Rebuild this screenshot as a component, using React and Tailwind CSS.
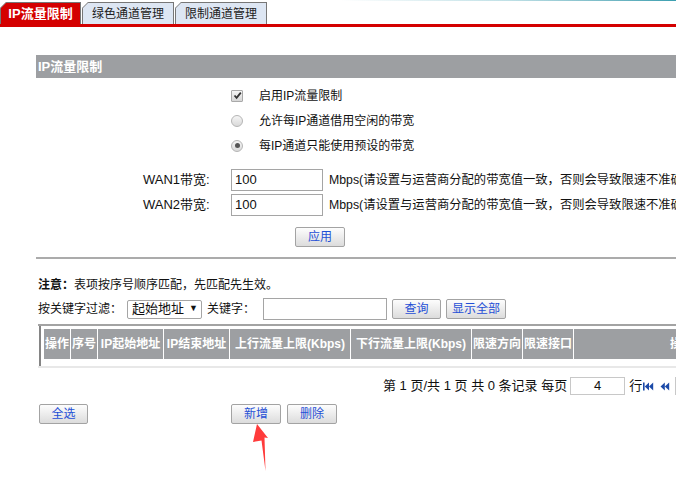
import React from "react";

const font = "font-['Liberation_Sans','Noto_Sans_CJK_SC',sans-serif]";
const btn =
    "h-[20px] border border-[#a3a3a3] rounded-[2px] bg-gradient-to-b from-[#fdfdfd] to-[#dcdcdc] text-[12px] text-[#1f4fd6] flex items-center justify-center shrink-0";

const Corner = () => (
    <svg
        className="absolute top-[-1px] left-[-1px]"
        width="7"
        height="7"
        viewBox="0 0 7 7"
    >
        <polygon points="0,0 6.5,0 0,6.5" fill="#fff" />
        <line x1="0" y1="6.5" x2="6.5" y2="0" stroke="#777" strokeWidth="1" />
    </svg>
);

const Tab = ({ label, active, width }) => (
    <div
        className={`relative h-[22px] border border-b-0 border-[#777] flex items-center justify-center shrink-0 ${width} ${
            active
                ? "bg-[#d40000] text-white font-bold text-[13px]"
                : "bg-[#dde6f3] text-[#222] text-[12px]"
        }`}
    >
        <Corner />
        {label}
    </div>
);

const Checkbox = () => (
    <span className="w-[12px] h-[12px] border border-[#a9a9a9] rounded-[1px] bg-gradient-to-b from-[#f4f4f4] to-[#d6d6d6] flex items-center justify-center shrink-0">
        <svg width="9" height="9" viewBox="0 0 9 9">
            <path d="M1.5 4.5 L3.6 6.8 L7.8 1.6" fill="none" stroke="#333" strokeWidth="1.8" />
        </svg>
    </span>
);

const Radio = ({ checked }) => (
    <span className="w-[12px] h-[12px] rounded-full border border-[#b5b5b5] bg-gradient-to-b from-[#f5f5f5] to-[#d9d9d9] flex items-center justify-center shrink-0">
        {checked && <span className="w-[5px] h-[5px] rounded-full bg-[#555]" />}
    </span>
);

const columns = [
    { label: "操作", w: "w-[26px]" },
    { label: "序号", w: "w-[26px]" },
    { label: "IP起始地址", w: "w-[65px]" },
    { label: "IP结束地址", w: "w-[65px]" },
    { label: "上行流量上限(Kbps)", w: "w-[120px]" },
    { label: "下行流量上限(Kbps)", w: "w-[120px]" },
    { label: "限速方向", w: "w-[50px]" },
    { label: "限速接口", w: "w-[50px]" },
    { label: "操作", w: "w-[216px]" },
];

const First = () => (
    <svg width="11" height="9" viewBox="0 0 11 9">
        <rect x="0" y="0.5" width="1.6" height="8" fill="#1b4aa8" />
        <polygon points="1.8,4.5 6,0.5 6,8.5" fill="#1b4aa8" />
        <polygon points="6,4.5 10.2,0.5 10.2,8.5" fill="#1b4aa8" />
    </svg>
);

const Prev = () => (
    <svg width="10" height="9" viewBox="0 0 10 9">
        <polygon points="0.5,4.5 4.8,0.5 4.8,8.5" fill="#1b4aa8" />
        <polygon points="4.8,4.5 9.2,0.5 9.2,8.5" fill="#1b4aa8" />
    </svg>
);

export default function App() {
    return (
        <div className={`relative w-[676px] h-[484px] overflow-hidden bg-white text-[12px] text-[#111] ${font}`}>
            <div className="absolute top-0 left-[340px] right-0 h-px bg-gradient-to-r from-white via-[#bfe0e6] to-[#3a9fb0]" />

            {/* tabs */}
            <div className="flex items-end gap-px h-[24px]">
                <Tab label="IP流量限制" active width="w-[81px]" />
                <Tab label="绿色通道管理" width="w-[92px]" />
                <Tab label="限制通道管理" width="w-[92px]" />
            </div>
            <div className="h-[3px] bg-[#d40000]" />

            <div className="ml-[36px] mt-[28px] whitespace-nowrap">
                <div className="h-[23px] bg-[#9d9fa2] text-white font-bold text-[13px] flex items-center pl-[2px]">
                    IP流量限制
                </div>

                <div className="mt-[5px] ml-[195px] flex flex-col">
                    <div className="h-[25px] flex items-center">
                        <Checkbox />
                        <span className="ml-[16px]">启用IP流量限制</span>
                    </div>
                    <div className="h-[25px] flex items-center">
                        <Radio />
                        <span className="ml-[16px]">允许每IP通道借用空闲的带宽</span>
                    </div>
                    <div className="h-[25px] flex items-center">
                        <Radio checked />
                        <span className="ml-[16px]">每IP通道只能使用预设的带宽</span>
                    </div>
                </div>

                {["WAN1带宽:", "WAN2带宽:"].map((label, i) => (
                    <div
                        key={label}
                        className={`flex items-center h-[22px] text-[13px] ${i === 0 ? "mt-[11px]" : "mt-[3px]"}`}
                    >
                        <span className="ml-[107px] w-[88px] shrink-0">{label}</span>
                        <div className="w-[92px] h-[22px] border border-[#a5a5a5] flex items-center pl-[3px] shrink-0">
                            100
                        </div>
                        <span className="ml-[6px] shrink-0 text-[12.3px]">
                            Mbps(请设置与运营商分配的带宽值一致，否则会导致限速不准确)
                        </span>
                    </div>
                ))}

                <div className="mt-[11px] ml-[259px]">
                    <button className={`${btn} w-[50px]`}>应用</button>
                </div>

                <div className="mt-[10px] h-[2px] bg-[#ababab]" />

                <div className="mt-[18px] pl-[2px] h-[16px] flex items-center">
                    <b>注意：</b>表项按序号顺序匹配，先匹配先生效。
                </div>

                <div className="mt-[5px] pl-[2px] h-[22px] flex items-center">
                    <span>按关键字过滤：</span>
                    <div className="ml-[5px] w-[75px] h-[19px] border border-[#a5a5a5] rounded-[2px] flex items-center justify-between pl-[4px] pr-[3px] text-[13px] shrink-0">
                        <span>起始地址</span>
                        <span className="text-[9px]">▼</span>
                    </div>
                    <span className="ml-[5px]">关键字：</span>
                    <div className="ml-[8px] w-[124px] h-[22px] border border-[#a5a5a5] shrink-0" />
                    <button className={`${btn} ml-[5px] w-[49px]`}>查询</button>
                    <button className={`${btn} ml-[5px] w-[60px]`}>显示全部</button>
                </div>

                {/* table */}
                <div className="mt-[4px] ml-[2px] border-t-2 border-[#a3a3a3]">
                    <div className="ml-[1px] border-l-2 border-[#858585] pt-[3px] pl-[3px] pb-[7px]">
                        <div className="flex gap-px">
                            {columns.map((c, i) => (
                                <div
                                    key={i}
                                    className={`${c.w} h-[30px] shrink-0 bg-[#9d9fa2] text-white font-bold text-[12px] flex items-center justify-center`}
                                >
                                    {c.label}
                                </div>
                            ))}
                        </div>
                    </div>
                    <div className="h-[2px] bg-[#e8e8e8]" />
                </div>

                {/* pagination */}
                <div className="mt-[9px] ml-[347px] h-[18px] flex items-center text-[13px]">
                    <span className="shrink-0">第 1 页/共 1 页 共 0 条记录 每页</span>
                    <div className="ml-[3px] w-[55px] h-[18px] border border-[#c8c8c8] flex items-center justify-center shrink-0">
                        4
                    </div>
                    <span className="ml-[4px] shrink-0">行</span>
                    <span className="ml-[1px] shrink-0"><First /></span>
                    <span className="ml-[6px] shrink-0"><Prev /></span>
                    <div className="ml-[5px] w-[40px] h-[18px] border border-[#c8c8c8] shrink-0" />
                </div>

                {/* buttons */}
                <div className="mt-[9px] flex items-center">
                    <button className={`${btn} ml-[3px] w-[49px]`}>全选</button>
                    <button className={`${btn} ml-[143px] w-[50px]`}>新增</button>
                    <button className={`${btn} ml-[6px] w-[50px]`}>删除</button>
                </div>
            </div>

            {/* annotation arrow */}
            <svg
                className="absolute left-[248px] top-[420px]"
                width="26"
                height="56"
                viewBox="0 0 26 56"
            >
                <polygon
                    points="9,4 20,18 16.5,17.5 17.5,51 13.5,20.5 5,22"
                    fill="#ff3b3b"
                />
            </svg>
        </div>
    );
}
